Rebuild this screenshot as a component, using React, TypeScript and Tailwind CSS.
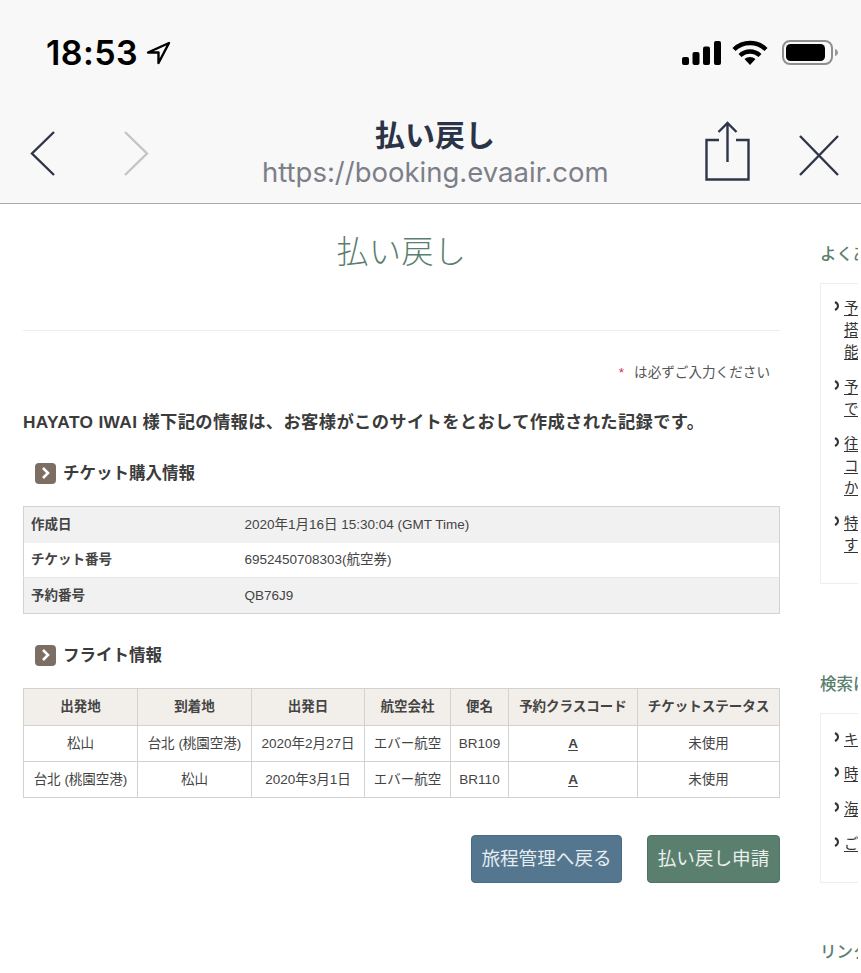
const sans = "font-['Liberation_Sans','Noto_Sans_CJK_JP',sans-serif]";

const flights = [
  { from: "松山", to: "台北 (桃園空港)", date: "2020年2月27日", flight: "BR109" },
  { from: "台北 (桃園空港)", to: "松山", date: "2020年3月1日", flight: "BR110" },
];

const faqItems = [
  ["予約変更の際に", "搭乗者の変更は可", "能ですか"],
  ["予約の確認は", "できますか"],
  ["往復航空券の", "コードシェア便に", "かかる料金"],
  ["特別なお食事を", "すぐに予約する"],
];

const searchItems = ["キーワード検索", "時刻表", "海外の空港", "ご利用案内"];

function StatusBar() {
  return (
    <div className="flex h-[106px] items-start justify-between pt-[32px] pl-[46px] pr-[23px]">
      <div className="flex items-center gap-[8px]">
        <span className="font-['Inter',sans-serif] text-[34px] leading-[42px] font-semibold tracking-[0.4px] text-black">18:53</span>
        <svg width="25" height="25" viewBox="0 0 25 25" fill="none" stroke="#000" strokeWidth="2.4" strokeLinejoin="round">
          <path d="M23 2 2 11.5h10.5V22Z" />
        </svg>
      </div>
      <div className="mt-[8px] flex items-center gap-[11px]">
        <svg width="39" height="24" viewBox="0 0 39 24" fill="#000">
          <rect x="0" y="16" width="7" height="8" rx="2" />
          <rect x="10.5" y="11" width="7" height="13" rx="2" />
          <rect x="21" y="5.5" width="7" height="18.5" rx="2" />
          <rect x="32" y="0" width="7" height="24" rx="2" />
        </svg>
        <svg width="36" height="25" viewBox="0 0 36 25" fill="none" stroke="#000" strokeWidth="4.4">
          <path d="M2 9.5c9-8.6 23-8.6 32 0" />
          <path d="M8 15.5c5.8-5.3 14.2-5.3 20 0" />
          <path d="M18 25 12.5 19c3.2-2.7 7.8-2.7 11 0Z" fill="#000" stroke="none" />
        </svg>
        <svg width="56" height="25" viewBox="0 0 56 25" className="ml-[3px]">
          <rect x="1" y="1" width="49" height="23" rx="7" fill="none" stroke="#8f8f8f" strokeWidth="2" />
          <rect x="4" y="4" width="39" height="17" rx="4.5" fill="#000" />
          <path d="M53 9c2 .6 3 2 3 3.5s-1 3-3 3.5Z" fill="#9a9a9a" />
        </svg>
      </div>
    </div>
  );
}

function NavBar() {
  return (
    <div className="flex h-[98px] border-b border-[#a9a9ab]">
      <div className="flex w-[262px] items-start gap-[69px] pt-[25px] pl-[30px]">
        <svg width="25" height="45" viewBox="0 0 25 45" fill="none" stroke="#2f3649" strokeWidth="2.4">
          <path d="M24 1 2 22.5 24 44" />
        </svg>
        <svg width="25" height="45" viewBox="0 0 25 45" fill="none" stroke="#c4c5c9" strokeWidth="2.4">
          <path d="M1 1 23 22.5 1 44" />
        </svg>
      </div>
      <div className="w-[346px] pt-[8px] text-center">
        <div className="font-['Noto_Sans_CJK_JP',sans-serif] text-[30px] leading-[38px] font-bold text-[#2b3347]">払い戻し</div>
        <div className="mt-[1px] font-['Inter',sans-serif] text-[27.5px] leading-[38px] whitespace-nowrap text-[#7d7f88]">https://booking.evaair.com</div>
      </div>
      <div className="flex flex-1 items-start pt-[15px] pl-[97px]">
        <svg width="45" height="60" viewBox="0 0 45 60" fill="none" stroke="#2f3649" strokeWidth="2.4" className="shrink-0">
          <path d="M14 19H1.5v39.5h42V19H31" />
          <path d="M22.5 41V2M13.5 11l9-9 9 9" />
        </svg>
        <svg width="40" height="41" viewBox="0 0 40 41" fill="none" stroke="#2f3649" strokeWidth="2.4" className="mt-[14px] ml-[49px] shrink-0">
          <path d="M1 1l38 39M39 1 1 40" />
        </svg>
      </div>
    </div>
  );
}

function SectionTitle({ children }: { children: string }) {
  return (
    <h2 className="flex items-center gap-[7px] pl-[12px] text-[16.5px] leading-[24px] font-bold text-[#3b3b3b]">
      <span className="flex h-[21px] w-[21px] items-center justify-center rounded-[4px] bg-[#7d6e63]">
        <svg width="10" height="12" viewBox="0 0 10 12" fill="none" stroke="#fff" strokeWidth="2.6">
          <path d="M2 1l5 5-5 5" />
        </svg>
      </span>
      {children}
    </h2>
  );
}

function SideBox({ title, className, children }: { title: string; className: string; children: React.ReactNode }) {
  return (
    <div>
      <h3 className="text-[16.5px] leading-[22px] font-medium whitespace-nowrap text-[#5a7f6e]">{title}</h3>
      <div className={`mt-[18px] border border-[#eeeeee] ${className}`}>{children}</div>
    </div>
  );
}

function SideLink({ lines, className }: { lines: string[]; className?: string }) {
  return (
    <li className={`flex items-start ${className ?? ""}`}>
      <svg width="6" height="10" viewBox="0 0 6 10" fill="none" stroke="#333" strokeWidth="2" className="mt-[4px] mr-[4px] shrink-0">
        <path d="M1 1c2 1 3 2.500 3 4s-1 3-3 4" />
      </svg>
      <div className="text-[14.5px] leading-[22px] whitespace-nowrap text-[#333]">
        {lines.map((l) => (
          <div key={l} className="underline underline-offset-2">{l}</div>
        ))}
      </div>
    </li>
  );
}

export default function App() {
  return (
    <div className={`h-[973px] w-[861px] overflow-hidden bg-white ${sans}`}>
      <div className="bg-[#f8f8f8]">
        <StatusBar />
        <NavBar />
      </div>

      <div className="flex pl-[23px]">
        <main className="w-[757px] shrink-0">
          <h1 className="mt-[22px] text-center font-['Noto_Sans_CJK_JP',sans-serif] text-[32px] leading-[46px] font-light tracking-[0.5px] text-[#5a7f6e]">払い戻し</h1>
          <hr className="mt-[58px] border-[#ececec]" />
          <p className="mt-[33px] pr-[10px] text-right text-[13.6px] leading-[18px] text-[#555]">
            <span className="mr-[10px] text-[#c8324a]">*</span>は必ずご入力ください
          </p>
          <p className="mt-[28px] text-[17.3px] leading-[24px] font-bold tracking-[0.35px] whitespace-nowrap text-[#3b3b3b]">
            HAYATO IWAI 様下記の情報は、お客様がこのサイトをとおして作成された記録です。
          </p>
          <div className="mt-[27px]">
            <SectionTitle>チケット購入情報</SectionTitle>
          </div>
          <table className="mt-[21px] w-full table-fixed border-collapse border border-[#d2d2d2] text-[13.5px] text-[#444]">
            <colgroup>
              <col className="w-[221px]" />
              <col />
            </colgroup>
            <tbody>
              <tr className="h-[36px] bg-[#f1f1f1]">
                <th className="pl-[7px] text-left font-bold">作成日</th>
                <td>2020年1月16日 15:30:04 (GMT Time)</td>
              </tr>
              <tr className="h-[35px] border-b border-[#e6e6e6] bg-white">
                <th className="pl-[7px] text-left font-bold">チケット番号</th>
                <td>6952450708303(航空券)</td>
              </tr>
              <tr className="h-[36px] bg-[#f1f1f1]">
                <th className="pl-[7px] pt-[1px] text-left font-bold">予約番号</th>
                <td className="pt-[1px]">QB76J9</td>
              </tr>
            </tbody>
          </table>
          <div className="mt-[29px]">
            <SectionTitle>フライト情報</SectionTitle>
          </div>
          <table className="mt-[21px] w-full table-fixed border-collapse text-center text-[13.5px] text-[#444] [&_td]:border [&_td]:border-[#d2d2d2] [&_td]:pt-[1px] [&_th]:border [&_th]:border-[#d2d2d2]">
            <colgroup>
              <col className="w-[114px]" />
              <col className="w-[114px]" />
              <col className="w-[113px]" />
              <col className="w-[86px]" />
              <col className="w-[58px]" />
              <col className="w-[129px]" />
              <col />
            </colgroup>
            <thead>
              <tr className="h-[37px] bg-[#f2eeea]">
                <th>出発地</th>
                <th>到着地</th>
                <th>出発日</th>
                <th>航空会社</th>
                <th>便名</th>
                <th>予約クラスコード</th>
                <th>チケットステータス</th>
              </tr>
            </thead>
            <tbody>
              {flights.map((f) => (
                <tr key={f.flight} className="h-[36px]">
                  <td>{f.from}</td>
                  <td>{f.to}</td>
                  <td>{f.date}</td>
                  <td>エバー航空</td>
                  <td>{f.flight}</td>
                  <td className="font-bold underline underline-offset-2">A</td>
                  <td>未使用</td>
                </tr>
              ))}
            </tbody>
          </table>
          <div className="mt-[37px] flex justify-end gap-[25px]">
            <button className="h-[48px] w-[151px] rounded-[4px] border border-[#4a6d87] bg-[#54768f] text-[18.6px] text-[#e6edf1]">旅程管理へ戻る</button>
            <button className="h-[48px] w-[133px] rounded-[4px] border border-[#4f7463] bg-[#5a7f6e] text-[18.6px] text-[#e8efec]">払い戻し申請</button>
          </div>
        </main>

        <aside className="ml-[40px] w-[38px] shrink-0 overflow-hidden pt-[39px]">
          <div className="w-[240px]">
            <SideBox title="よくある質問" className="h-[301px] pt-[13px] pl-[13px]">
              <ul>
                {faqItems.map((lines) => (
                  <SideLink key={lines[0] + lines[1]} lines={lines} className="mb-[13px]" />
                ))}
              </ul>
            </SideBox>
            <div className="mt-[89px]">
              <SideBox title="検索に関する情報" className="h-[170px] pt-[14px] pl-[13px]">
                <ul>
                  {searchItems.map((s) => (
                    <SideLink key={s} lines={[s]} className="mb-[13px]" />
                  ))}
                </ul>
              </SideBox>
            </div>
            <h3 className="mt-[58px] text-[16.5px] leading-[22px] font-medium whitespace-nowrap text-[#5a7f6e]">リンク集</h3>
          </div>
        </aside>
      </div>
    </div>
  );
}
